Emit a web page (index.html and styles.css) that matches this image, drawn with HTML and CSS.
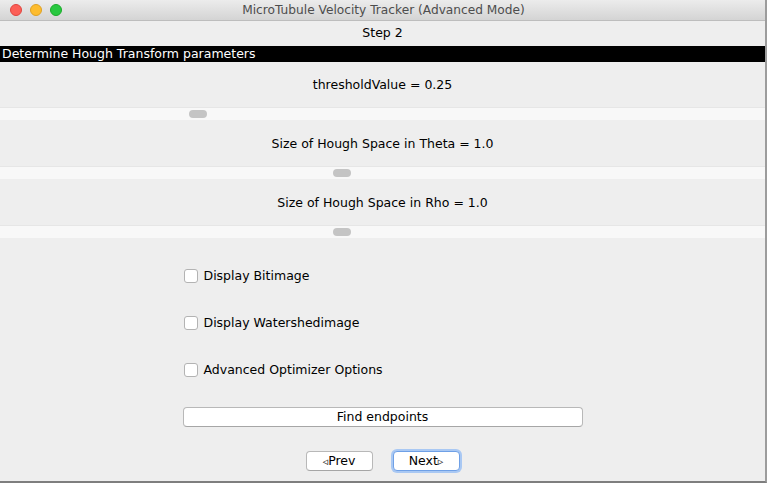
FILE: index.html
```html
<!DOCTYPE html>
<html>
<head>
<meta charset="utf-8">
<link rel="stylesheet" href="styles.css">
</head>
<body>
<div class="window">
  <div class="titlebar">
    <div class="lights">
      <span class="light red"></span>
      <span class="light yellow"></span>
      <span class="light green"></span>
    </div>
    <div class="title">MicroTubule Velocity Tracker (Advanced Mode)</div>
  </div>
  <div class="step">Step 2</div>
  <div class="section">Determine Hough Transform parameters</div>

  <div class="param">thresholdValue = 0.25</div>
  <div class="track"><span class="thumb" style="margin-left:189px"></span></div>
  <div class="param">Size of Hough Space in Theta = 1.0</div>
  <div class="track"><span class="thumb" style="margin-left:333px"></span></div>
  <div class="param">Size of Hough Space in Rho = 1.0</div>
  <div class="track"><span class="thumb" style="margin-left:333px"></span></div>

  <div class="options">
    <div class="column">
      <label class="check"><span class="box"></span>Display Bitimage</label>
      <label class="check"><span class="box"></span>Display Watershedimage</label>
      <label class="check"><span class="box"></span>Advanced Optimizer Options</label>
      <div class="btn wide">Find endpoints</div>
    </div>
  </div>
  <div class="nav">
    <div class="btn prev"><span class="arrow">◃</span>Prev</div>
    <div class="btn next focus">Next<span class="arrow">▹</span></div>
  </div>
</div>
</body>
</html>
```

FILE: styles.css
```css
* { box-sizing: border-box; }
html, body { margin: 0; padding: 0; background: #ffffff; }
body {
  font-family: "DejaVu Sans", "Liberation Sans", sans-serif;
  font-size: 12.5px;
  color: #000000;
}
.window {
  width: 767px;
  height: 483px;
  background: #eeeeee;
  border-right: 2px solid #9c9c9c;
  border-bottom: 2px solid #7e7e7e;
  display: flex;
  flex-direction: column;
  overflow: hidden;
}
.titlebar {
  height: 21px;
  flex: none;
  display: flex;
  align-items: center;
  position: relative;
  background: linear-gradient(#ececec, #d4d4d4);
  border-bottom: 1px solid #bdbdbd;
}
.lights {
  display: flex;
  gap: 8px;
  padding-left: 10px;
  position: absolute;
  left: 0;
  top: 4px;
}
.light {
  width: 12px;
  height: 12px;
  border-radius: 50%;
  display: block;
}
.red { background: #fc5f57; border: 1px solid #e0443e; }
.yellow { background: #fdbc2e; border: 1px solid #dea123; }
.green { background: #28c840; border: 1px solid #1aab29; }
.title {
  flex: 1;
  text-align: center;
  font-size: 12.2px;
  color: #4d4d4d;
  padding-left: 2px;
}
.step {
  height: 25px;
  flex: none;
  text-align: center;
  line-height: 23px;
}
.section {
  height: 16px;
  flex: none;
  background: #000000;
  color: #ffffff;
  line-height: 16px;
  padding-left: 2px;
}
.param {
  height: 45px;
  flex: none;
  display: flex;
  align-items: center;
  justify-content: center;
}
.param + .track + .param { height: 46px; }
.track {
  height: 13px;
  flex: none;
  background: #f8f8f8;
  border-top: 1px solid #e6e6e6;
  padding-top: 2px;
}
.thumb {
  display: block;
  width: 18px;
  height: 8px;
  border-radius: 4px;
  background: #c4c4c4;
}
.options {
  display: flex;
  justify-content: center;
  padding-top: 30px;
}
.column {
  width: 400px;
  display: flex;
  flex-direction: column;
}
.check {
  display: flex;
  align-items: center;
  height: 15px;
  margin-bottom: 32px;
  padding-left: 1px;
}
.box {
  width: 14px;
  height: 14px;
  background: #ffffff;
  border: 1px solid #b3b3b3;
  border-radius: 3px;
  margin-right: 6px;
  flex: none;
}
.btn {
  height: 20px;
  background: #ffffff;
  border: 1px solid #b8b8b8;
  border-bottom-color: #a6a6a6;
  border-radius: 4px;
  display: flex;
  align-items: center;
  justify-content: center;
  line-height: 1;
}
.wide {
  width: 400px;
  margin-top: -2px;
}
.nav {
  display: flex;
  justify-content: center;
  gap: 20px;
  padding-top: 24px;
}
.arrow {
  font-size: 11px;
  color: #222222;
}
.prev { width: 67px; }
.next { width: 67px; }
.focus {
  border-color: #6fa0e6;
  box-shadow: 0 0 0 2px #a9c8f3;
}
```
